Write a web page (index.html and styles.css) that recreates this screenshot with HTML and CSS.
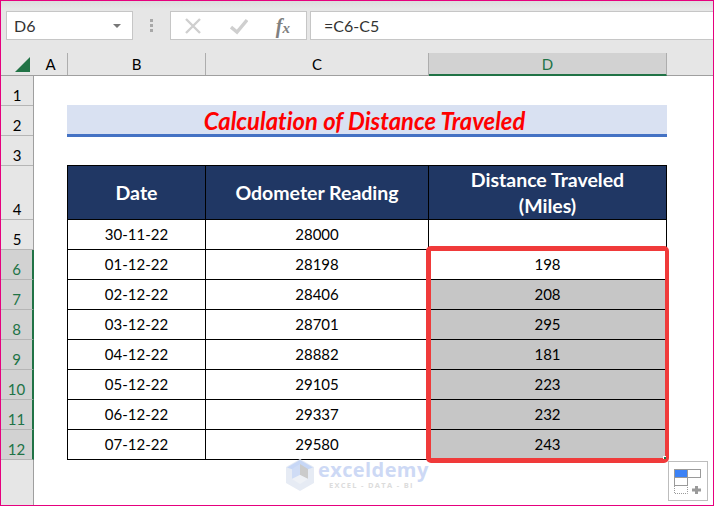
FILE: index.html
```html
<!DOCTYPE html>
<html lang="en">
<head>
    <meta charset="UTF-8">
    <meta name="viewport" content="width=device-width, initial-scale=1.0">
    <title>Calculation of Distance Traveled</title>
    <link rel="stylesheet" href="styles.css">
</head>
<body>

<div class="app">
    <!-- Formula bar -->
    <div class="formula-bar">
        <div class="name-box">
            <span>D6</span>
            <span class="name-arrow"></span>
        </div>
        <div class="grip"><i></i><i></i><i></i></div>
        <div class="fx-box">
            <svg class="fx-icon" width="18" height="18" viewBox="0 0 18 18"><path d="M2 2 L16 16 M16 2 L2 16" stroke="#cfcfcf" stroke-width="2.4" fill="none"/></svg>
            <svg class="fx-icon" width="18" height="18" viewBox="0 0 18 18"><path d="M1 10 L7 15 L17 3" stroke="#cfcfcf" stroke-width="3.4" fill="none"/></svg>
            <span class="fx-label">f<sub>x</sub></span>
        </div>
        <div class="formula-input">=C6-C5</div>
    </div>

    <!-- Column headers -->
    <div class="col-heads">
        <div class="corner"><span class="corner-mark"></span></div>
        <div class="col-head col-a">A</div>
        <div class="col-head col-b">B</div>
        <div class="col-head col-c">C</div>
        <div class="col-head col-d selected">D</div>
    </div>

    <div class="grid-area">
        <!-- Row headers -->
        <div class="row-heads">
            <div class="row-head">1</div>
            <div class="row-head">2</div>
            <div class="row-head">3</div>
            <div class="row-head tall">4</div>
            <div class="row-head">5</div>
            <div class="row-head selected">6</div>
            <div class="row-head selected">7</div>
            <div class="row-head selected">8</div>
            <div class="row-head selected">9</div>
            <div class="row-head selected">10</div>
            <div class="row-head selected">11</div>
            <div class="row-head selected">12</div>
        </div>

        <div class="sheet">
            <div class="sheet-title">Calculation of Distance Traveled</div>
            <table class="data-table">
                <thead>
                    <tr>
                        <th class="w-b">Date</th>
                        <th class="w-c">Odometer Reading</th>
                        <th class="w-d">Distance Traveled<br>(Miles)</th>
                    </tr>
                </thead>
                <tbody>
                    <tr><td>30-11-22</td><td>28000</td><td></td></tr>
                    <tr><td>01-12-22</td><td>28198</td><td>198</td></tr>
                    <tr><td>02-12-22</td><td>28406</td><td class="filled">208</td></tr>
                    <tr><td>03-12-22</td><td>28701</td><td class="filled">295</td></tr>
                    <tr><td>04-12-22</td><td>28882</td><td class="filled">181</td></tr>
                    <tr><td>05-12-22</td><td>29105</td><td class="filled">223</td></tr>
                    <tr><td>06-12-22</td><td>29337</td><td class="filled">232</td></tr>
                    <tr><td>07-12-22</td><td>29580</td><td class="filled">243</td></tr>
                </tbody>
            </table>
        </div>
    </div>

    <!-- Things lying over the sheet -->
    <div class="red-box"><span class="fill-handle"></span></div>

    <div class="watermark">
        <svg width="28" height="32" viewBox="0 0 28 32">
            <path d="M14 0 L28 8 L28 24 L14 32 L0 24 L0 8 Z" fill="#e6ebf4"/>
            <path d="M14 1 L27 8.500 L14 13 L1 8.500 Z" fill="#c7d7f6"/>
            <path d="M14 5 L22 10 L22 20 L14 16 Z" fill="#cbcbcb"/>
            <path d="M14 5 L6 10 L6 20 L14 16 Z" fill="#cfdcf5"/>
            <path d="M6 20 L14 16 L22 20 L14 25 Z" fill="#eef1f6"/>
        </svg>
        <div class="watermark-text">
            <div class="watermark-name">exceldemy</div>
            <div class="watermark-tag">EXCEL - DATA - BI</div>
        </div>
    </div>

    <div class="paste-options">
        <svg width="28" height="26" viewBox="0 0 28 26">
            <rect x="0.5" y="0.5" width="13" height="8" fill="#3c82f6" stroke="#9a9a9a"/>
            <rect x="13.5" y="0.5" width="13" height="8" fill="#fff" stroke="#9a9a9a"/>
            <rect x="0.5" y="8.500" width="13" height="8" fill="#fff" stroke="#9a9a9a"/>
            <path d="M0.5 17 V24.500 H13.5 V17" fill="none" stroke="#9a9a9a" stroke-dasharray="1 1"/>
            <path d="M18 21 H27 M22.500 17 V25" stroke="#9a9a9a" stroke-width="3" fill="none"/>
        </svg>
    </div>
</div>

</body>
</html>
```

FILE: styles.css
```css
html, body {
    margin: 0;
    padding: 0;
}

body {
    width: 714px;
    height: 506px;
    overflow: hidden;
    font-family: Lato, "Liberation Sans", sans-serif;
    font-variant-ligatures: none;
    color: #000;
}

.app {
    position: relative;
    box-sizing: border-box;
    width: 714px;
    height: 506px;
    border: 1px solid #e6007e;
    background: #fff;
    overflow: hidden;
}

/* Formula bar */
.formula-bar {
    display: flex;
    align-items: stretch;
    height: 39px;
    box-sizing: border-box;
    padding-top: 10px;
    background: linear-gradient(#dcdcdc, #e6e6e6 8px);
}

.name-box {
    display: flex;
    align-items: center;
    justify-content: space-between;
    box-sizing: border-box;
    width: 127px;
    margin-left: 5px;
    padding: 0 11px 0 7px;
    background: #fff;
    border: 1px solid #c6c6c6;
    font-size: 16px;
    color: #333;
}

.name-arrow {
    width: 0;
    height: 0;
    border-left: 4px solid transparent;
    border-right: 4px solid transparent;
    border-top: 4px solid #777;
}

.grip {
    display: flex;
    flex-direction: column;
    justify-content: center;
    gap: 2px;
    width: 37px;
    align-items: center;
}

.grip i {
    width: 3px;
    height: 3px;
    background: #a8a8a8;
}

.fx-box {
    display: flex;
    align-items: center;
    justify-content: space-between;
    box-sizing: border-box;
    width: 137px;
    padding: 0 16px 0 13px;
    background: #fff;
    border: 1px solid #c6c6c6;
}

.fx-label {
    font-family: "Liberation Serif", serif;
    font-style: italic;
    font-weight: bold;
    font-size: 20px;
    color: #808080;
    line-height: 1;
}

.fx-label sub {
    font-size: 15px;
    vertical-align: baseline;
}

.formula-input {
    flex: 1;
    display: flex;
    align-items: center;
    margin-left: 3px;
    padding-left: 13px;
    background: #fff;
    border: 1px solid #c6c6c6;
    border-right: none;
    font-size: 16px;
    color: #333;
}

/* Column headers */
.col-heads {
    display: flex;
    align-items: stretch;
    box-sizing: border-box;
    height: 36px;
    padding-top: 13px;
    background: #e6e6e6;
    border-bottom: 1px solid #9f9f9f;
}

.corner {
    position: relative;
    width: 32px;
    margin-right: 1px;
}

.corner-mark {
    position: absolute;
    right: 3px;
    top: 4px;
    width: 0;
    height: 0;
    border-left: 15px solid transparent;
    border-bottom: 15px solid #217346;
}

.col-head {
    display: flex;
    align-items: center;
    justify-content: center;
    box-sizing: border-box;
    border-right: 1px solid #adadad;
    font-size: 15px;
}

.col-a { width: 34px; }
.col-b { width: 138px; }
.col-c { width: 223px; }

.col-d {
    width: 238px;
    margin-bottom: -1px;
}

.col-head.selected {
    background: #d2d2d2;
    color: #217346;
    border-bottom: 2px solid #217346;
}

/* Row headers + cells */
.grid-area {
    display: flex;
}

.row-heads {
    width: 33px;
    flex: none;
    background: #e6e6e6;
    height: 430px;
    border-right: 1px solid #9f9f9f;
    box-sizing: border-box;
}

.row-head {
    display: flex;
    align-items: flex-end;
    justify-content: center;
    box-sizing: border-box;
    height: 30px;
    padding-bottom: 1px;
    border-bottom: 1px solid #b5b5b5;
    font-size: 15px;
}

.row-head.tall {
    height: 54px;
}

.row-head.selected {
    background: #d2d2d2;
    color: #217346;
    margin-right: -1px;
    border-right: 2px solid #217346;
}

.sheet {
    padding: 29px 0 0 33px;
}

.sheet-title {
    box-sizing: border-box;
    width: 600px;
    height: 32px;
    margin-bottom: 28px;
    padding-right: 5px;
    background: #d9e1f2;
    border-bottom: 3px solid #4472c4;
    color: #ff0000;
    font-size: 23.800px;
    font-weight: bold;
    font-style: italic;
    line-height: 33px;
    text-align: center;
}

.data-table {
    border-spacing: 0;
    border-collapse: separate;
    table-layout: fixed;
    border-top: 1px solid #000;
    border-left: 1px solid #000;
    font-size: 15px;
}

.data-table th,
.data-table td {
    box-sizing: border-box;
    padding: 0;
    text-align: center;
    border-right: 1px solid #000;
    border-bottom: 1px solid #000;
}

.data-table th {
    height: 54px;
    padding-top: 1px;
    background: #203764;
    color: #fff;
    font-size: 19.500px;
    font-weight: bold;
    line-height: 26px;
}

.data-table td {
    height: 30px;
    padding-bottom: 2px;
}

.w-b { width: 138px; }
.w-c { width: 223px; }
.w-d { width: 238px; }

.data-table td.filled {
    background: #c6c6c6;
}

/* Overlays */
.red-box {
    position: absolute;
    left: 425px;
    top: 245px;
    width: 234px;
    height: 207px;
    border-style: solid;
    border-color: #f03a3a;
    border-width: 5px 4px 5px 5px;
    border-radius: 5px;
}

.fill-handle {
    position: absolute;
    right: -1px;
    bottom: -1px;
    width: 2px;
    height: 2px;
    background: #217346;
    border-left: 1px solid #fff;
    border-top: 1px solid #fff;
}

.watermark {
    position: absolute;
    left: 285px;
    top: 458px;
    display: flex;
    align-items: flex-start;
    gap: 4px;
}

.watermark-name {
    font-family: "Open Sans", sans-serif;
    font-size: 20px;
    font-weight: bold;
    line-height: 22px;
    letter-spacing: 0.4px;
    color: #cdd9f5;
}

.watermark-tag {
    padding-right: 4px;
    font-family: "Open Sans", sans-serif;
    font-size: 7.500px;
    font-weight: bold;
    line-height: 9px;
    letter-spacing: 1.300px;
    text-align: center;
    color: #dcdcdc;
}

.paste-options {
    position: absolute;
    left: 667px;
    top: 460px;
    display: flex;
    align-items: center;
    justify-content: center;
    box-sizing: border-box;
    width: 40px;
    height: 40px;
    padding-top: 1px;
    background: #fff;
    border: 1px solid #bdbdbd;
}
```
